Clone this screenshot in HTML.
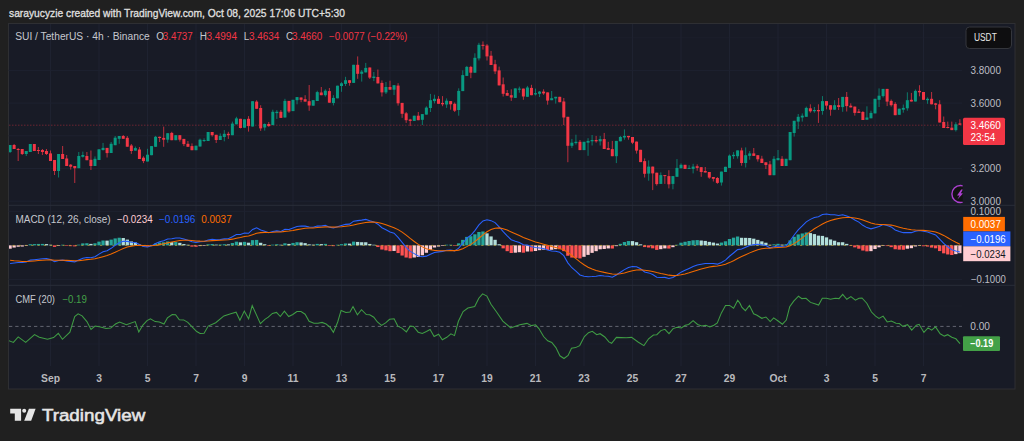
<!DOCTYPE html>
<html><head><meta charset="utf-8">
<style>
html,body{margin:0;padding:0;background:#202020;width:1024px;height:441px;overflow:hidden}
svg{display:block}
text{font-family:"Liberation Sans",sans-serif}
</style></head>
<body>
<svg width="1024" height="441" viewBox="0 0 1024 441">
<rect x="0" y="0" width="1024" height="441" fill="#202020"/>
<!-- header -->
<text x="9" y="17" font-size="11" fill="#dedede" stroke="#dedede" stroke-width="0.35" textLength="336" lengthAdjust="spacingAndGlyphs">sarayucyzie created with TradingView.com, Oct 08, 2025 17:06 UTC+5:30</text>
<!-- panel -->
<rect x="8.5" y="23.5" width="1006.5" height="365.5" fill="#181b26" stroke="#2e2f33" stroke-width="1"/>
<defs><clipPath id="ca"><rect x="9" y="24" width="953.7" height="342"/></clipPath></defs>
<g stroke="#1e2230" stroke-width="1"><line x1="50.50" y1="24" x2="50.50" y2="366" /><line x1="99.00" y1="24" x2="99.00" y2="366" /><line x1="147.50" y1="24" x2="147.50" y2="366" /><line x1="196.00" y1="24" x2="196.00" y2="366" /><line x1="244.50" y1="24" x2="244.50" y2="366" /><line x1="293.00" y1="24" x2="293.00" y2="366" /><line x1="341.50" y1="24" x2="341.50" y2="366" /><line x1="390.00" y1="24" x2="390.00" y2="366" /><line x1="438.50" y1="24" x2="438.50" y2="366" /><line x1="487.00" y1="24" x2="487.00" y2="366" /><line x1="535.50" y1="24" x2="535.50" y2="366" /><line x1="584.00" y1="24" x2="584.00" y2="366" /><line x1="632.50" y1="24" x2="632.50" y2="366" /><line x1="681.00" y1="24" x2="681.00" y2="366" /><line x1="729.50" y1="24" x2="729.50" y2="366" /><line x1="778.00" y1="24" x2="778.00" y2="366" /><line x1="826.50" y1="24" x2="826.50" y2="366" /><line x1="875.00" y1="24" x2="875.00" y2="366" /><line x1="923.50" y1="24" x2="923.50" y2="366" /><line x1="8.5" y1="70.4" x2="962" y2="70.4" /><line x1="8.5" y1="103.1" x2="962" y2="103.1" /><line x1="8.5" y1="135.8" x2="962" y2="135.8" /><line x1="8.5" y1="168.5" x2="962" y2="168.5" /><line x1="8.5" y1="201.2" x2="962" y2="201.2" /><line x1="8.5" y1="211.3" x2="962" y2="211.3" /><line x1="8.5" y1="279.4" x2="962" y2="279.4" /><line x1="9" y1="37.8" x2="962" y2="37.8" opacity="0.55"/><line x1="9" y1="306" x2="962" y2="306" opacity="0.35"/><line x1="9" y1="344" x2="962" y2="344" opacity="0.6"/></g>
<!-- pane separators -->
<line x1="9" y1="205.3" x2="1015" y2="205.3" stroke="#2a2e39" stroke-width="1"/>
<line x1="9" y1="285.3" x2="1015" y2="285.3" stroke="#2a2e39" stroke-width="1"/>
<g clip-path="url(#ca)">
<!-- price line -->
<line x1="9" y1="125.2" x2="962" y2="125.2" stroke="#f23645" stroke-width="1" stroke-dasharray="1.5 1.5" opacity="0.38"/>
<rect x="9.58" y="145.0" width="1" height="8.0" fill="#089981" opacity="0.75"/>
<rect x="8.58" y="145.0" width="3" height="7.0" fill="#089981"/>
<rect x="13.62" y="144.0" width="1" height="5.0" fill="#f23645" opacity="0.75"/>
<rect x="12.62" y="145.0" width="3" height="4.0" fill="#f23645"/>
<rect x="17.67" y="148.0" width="1" height="13.0" fill="#f23645" opacity="0.75"/>
<rect x="16.67" y="149.0" width="3" height="1.0" fill="#f23645"/>
<rect x="21.71" y="149.0" width="1" height="6.0" fill="#f23645" opacity="0.75"/>
<rect x="20.71" y="149.0" width="3" height="5.0" fill="#f23645"/>
<rect x="25.75" y="151.0" width="1" height="5.0" fill="#089981" opacity="0.75"/>
<rect x="24.75" y="151.0" width="3" height="3.0" fill="#089981"/>
<rect x="29.79" y="144.0" width="1" height="8.0" fill="#089981" opacity="0.75"/>
<rect x="28.79" y="144.0" width="3" height="8.0" fill="#089981"/>
<rect x="33.83" y="144.0" width="1" height="7.0" fill="#f23645" opacity="0.75"/>
<rect x="32.83" y="144.0" width="3" height="7.0" fill="#f23645"/>
<rect x="37.87" y="147.0" width="1" height="7.0" fill="#f23645" opacity="0.75"/>
<rect x="36.87" y="150.0" width="3" height="1.0" fill="#f23645"/>
<rect x="41.92" y="149.0" width="1" height="6.0" fill="#f23645" opacity="0.75"/>
<rect x="40.92" y="150.0" width="3" height="2.0" fill="#f23645"/>
<rect x="45.96" y="149.0" width="1" height="6.0" fill="#f23645" opacity="0.75"/>
<rect x="44.96" y="151.0" width="3" height="3.0" fill="#f23645"/>
<rect x="50.00" y="150.5" width="1" height="10.5" fill="#f23645" opacity="0.75"/>
<rect x="49.00" y="153.4" width="3" height="7.6" fill="#f23645"/>
<rect x="54.04" y="160.0" width="1" height="15.0" fill="#f23645" opacity="0.75"/>
<rect x="53.04" y="160.0" width="3" height="11.0" fill="#f23645"/>
<rect x="58.08" y="154.0" width="1" height="23.5" fill="#089981" opacity="0.75"/>
<rect x="57.08" y="154.0" width="3" height="17.0" fill="#089981"/>
<rect x="62.13" y="146.0" width="1" height="13.0" fill="#f23645" opacity="0.75"/>
<rect x="61.13" y="154.0" width="3" height="5.0" fill="#f23645"/>
<rect x="66.17" y="155.0" width="1" height="11.0" fill="#f23645" opacity="0.75"/>
<rect x="65.17" y="158.5" width="3" height="7.5" fill="#f23645"/>
<rect x="70.21" y="164.0" width="1" height="5.6" fill="#f23645" opacity="0.75"/>
<rect x="69.21" y="164.7" width="3" height="2.0" fill="#f23645"/>
<rect x="74.25" y="166.0" width="1" height="17.0" fill="#f23645" opacity="0.75"/>
<rect x="73.25" y="166.0" width="3" height="2.2" fill="#f23645"/>
<rect x="78.29" y="152.0" width="1" height="16.2" fill="#089981" opacity="0.75"/>
<rect x="77.29" y="156.0" width="3" height="12.2" fill="#089981"/>
<rect x="82.33" y="151.6" width="1" height="5.9" fill="#089981" opacity="0.75"/>
<rect x="81.33" y="155.0" width="3" height="1.8" fill="#089981"/>
<rect x="86.38" y="152.0" width="1" height="8.2" fill="#f23645" opacity="0.75"/>
<rect x="85.38" y="156.0" width="3" height="4.2" fill="#f23645"/>
<rect x="90.42" y="150.5" width="1" height="19.5" fill="#f23645" opacity="0.75"/>
<rect x="89.42" y="159.8" width="3" height="6.2" fill="#f23645"/>
<rect x="94.46" y="156.4" width="1" height="9.6" fill="#089981" opacity="0.75"/>
<rect x="93.46" y="158.8" width="3" height="7.2" fill="#089981"/>
<rect x="98.50" y="149.3" width="1" height="10.7" fill="#089981" opacity="0.75"/>
<rect x="97.50" y="149.3" width="3" height="10.7" fill="#089981"/>
<rect x="102.54" y="142.9" width="1" height="7.7" fill="#089981" opacity="0.75"/>
<rect x="101.54" y="147.9" width="3" height="2.1" fill="#089981"/>
<rect x="106.58" y="147.9" width="1" height="9.6" fill="#f23645" opacity="0.75"/>
<rect x="105.58" y="147.9" width="3" height="5.2" fill="#f23645"/>
<rect x="110.63" y="142.0" width="1" height="11.0" fill="#089981" opacity="0.75"/>
<rect x="109.63" y="143.8" width="3" height="9.2" fill="#089981"/>
<rect x="114.67" y="136.0" width="1" height="9.2" fill="#089981" opacity="0.75"/>
<rect x="113.67" y="137.7" width="3" height="7.5" fill="#089981"/>
<rect x="118.71" y="136.0" width="1" height="7.8" fill="#089981" opacity="0.75"/>
<rect x="117.71" y="136.0" width="3" height="2.8" fill="#089981"/>
<rect x="122.75" y="135.0" width="1" height="3.8" fill="#f23645" opacity="0.75"/>
<rect x="121.75" y="136.0" width="3" height="2.8" fill="#f23645"/>
<rect x="126.79" y="136.0" width="1" height="10.7" fill="#f23645" opacity="0.75"/>
<rect x="125.79" y="137.8" width="3" height="8.9" fill="#f23645"/>
<rect x="130.83" y="144.0" width="1" height="9.9" fill="#f23645" opacity="0.75"/>
<rect x="129.83" y="145.5" width="3" height="5.5" fill="#f23645"/>
<rect x="134.88" y="146.5" width="1" height="4.1" fill="#089981" opacity="0.75"/>
<rect x="133.88" y="148.1" width="3" height="2.5" fill="#089981"/>
<rect x="138.92" y="147.0" width="1" height="12.0" fill="#f23645" opacity="0.75"/>
<rect x="137.92" y="149.5" width="3" height="9.5" fill="#f23645"/>
<rect x="142.96" y="156.3" width="1" height="6.8" fill="#f23645" opacity="0.75"/>
<rect x="141.96" y="157.7" width="3" height="3.4" fill="#f23645"/>
<rect x="147.00" y="148.8" width="1" height="12.7" fill="#089981" opacity="0.75"/>
<rect x="146.00" y="154.7" width="3" height="6.8" fill="#089981"/>
<rect x="151.04" y="146.1" width="1" height="9.1" fill="#089981" opacity="0.75"/>
<rect x="150.04" y="146.1" width="3" height="9.1" fill="#089981"/>
<rect x="155.08" y="135.9" width="1" height="10.9" fill="#089981" opacity="0.75"/>
<rect x="154.08" y="136.8" width="3" height="10.0" fill="#089981"/>
<rect x="159.13" y="136.6" width="1" height="5.4" fill="#f23645" opacity="0.75"/>
<rect x="158.13" y="136.8" width="3" height="1.2" fill="#f23645"/>
<rect x="163.17" y="126.6" width="1" height="20.2" fill="#f23645" opacity="0.75"/>
<rect x="162.17" y="137.9" width="3" height="1.8" fill="#f23645"/>
<rect x="167.21" y="133.2" width="1" height="9.5" fill="#089981" opacity="0.75"/>
<rect x="166.21" y="133.2" width="3" height="6.5" fill="#089981"/>
<rect x="171.25" y="131.8" width="1" height="8.4" fill="#f23645" opacity="0.75"/>
<rect x="170.25" y="132.9" width="3" height="7.3" fill="#f23645"/>
<rect x="175.29" y="135.2" width="1" height="5.0" fill="#089981" opacity="0.75"/>
<rect x="174.29" y="135.2" width="3" height="5.0" fill="#089981"/>
<rect x="179.33" y="135.2" width="1" height="6.4" fill="#f23645" opacity="0.75"/>
<rect x="178.33" y="135.2" width="3" height="4.5" fill="#f23645"/>
<rect x="183.38" y="138.9" width="1" height="7.2" fill="#f23645" opacity="0.75"/>
<rect x="182.38" y="138.9" width="3" height="5.2" fill="#f23645"/>
<rect x="187.42" y="141.0" width="1" height="5.8" fill="#f23645" opacity="0.75"/>
<rect x="186.42" y="143.8" width="3" height="3.0" fill="#f23645"/>
<rect x="191.46" y="143.4" width="1" height="6.8" fill="#f23645" opacity="0.75"/>
<rect x="190.46" y="146.1" width="3" height="4.1" fill="#f23645"/>
<rect x="195.50" y="145.7" width="1" height="4.5" fill="#089981" opacity="0.75"/>
<rect x="194.50" y="145.7" width="3" height="4.5" fill="#089981"/>
<rect x="199.54" y="138.6" width="1" height="7.9" fill="#089981" opacity="0.75"/>
<rect x="198.54" y="139.7" width="3" height="6.8" fill="#089981"/>
<rect x="203.58" y="138.3" width="1" height="3.7" fill="#089981" opacity="0.75"/>
<rect x="202.58" y="140.0" width="3" height="1.0" fill="#089981"/>
<rect x="207.63" y="132.0" width="1" height="9.0" fill="#089981" opacity="0.75"/>
<rect x="206.63" y="132.0" width="3" height="9.0" fill="#089981"/>
<rect x="211.67" y="132.0" width="1" height="4.6" fill="#f23645" opacity="0.75"/>
<rect x="210.67" y="132.0" width="3" height="3.2" fill="#f23645"/>
<rect x="215.71" y="134.8" width="1" height="8.2" fill="#f23645" opacity="0.75"/>
<rect x="214.71" y="134.8" width="3" height="5.2" fill="#f23645"/>
<rect x="219.75" y="133.4" width="1" height="6.6" fill="#089981" opacity="0.75"/>
<rect x="218.75" y="135.9" width="3" height="4.1" fill="#089981"/>
<rect x="223.79" y="130.1" width="1" height="11.2" fill="#089981" opacity="0.75"/>
<rect x="222.79" y="133.8" width="3" height="3.2" fill="#089981"/>
<rect x="227.83" y="131.8" width="1" height="7.1" fill="#f23645" opacity="0.75"/>
<rect x="226.83" y="133.8" width="3" height="1.4" fill="#f23645"/>
<rect x="231.88" y="121.6" width="1" height="13.6" fill="#089981" opacity="0.75"/>
<rect x="230.88" y="123.6" width="3" height="11.6" fill="#089981"/>
<rect x="235.92" y="116.8" width="1" height="7.5" fill="#089981" opacity="0.75"/>
<rect x="234.92" y="118.4" width="3" height="5.9" fill="#089981"/>
<rect x="239.96" y="118.8" width="1" height="9.6" fill="#f23645" opacity="0.75"/>
<rect x="238.96" y="118.8" width="3" height="9.2" fill="#f23645"/>
<rect x="244.00" y="119.3" width="1" height="8.4" fill="#089981" opacity="0.75"/>
<rect x="243.00" y="119.3" width="3" height="8.4" fill="#089981"/>
<rect x="248.04" y="116.1" width="1" height="15.5" fill="#f23645" opacity="0.75"/>
<rect x="247.04" y="118.8" width="3" height="7.3" fill="#f23645"/>
<rect x="252.08" y="101.2" width="1" height="25.3" fill="#089981" opacity="0.75"/>
<rect x="251.08" y="101.2" width="3" height="25.3" fill="#089981"/>
<rect x="256.13" y="100.2" width="1" height="8.6" fill="#f23645" opacity="0.75"/>
<rect x="255.13" y="101.6" width="3" height="7.2" fill="#f23645"/>
<rect x="260.17" y="105.2" width="1" height="25.7" fill="#f23645" opacity="0.75"/>
<rect x="259.17" y="108.0" width="3" height="20.4" fill="#f23645"/>
<rect x="264.21" y="123.4" width="1" height="7.2" fill="#089981" opacity="0.75"/>
<rect x="263.21" y="124.0" width="3" height="3.5" fill="#089981"/>
<rect x="268.25" y="122.0" width="1" height="4.8" fill="#f23645" opacity="0.75"/>
<rect x="267.25" y="124.0" width="3" height="2.1" fill="#f23645"/>
<rect x="272.29" y="109.7" width="1" height="15.4" fill="#089981" opacity="0.75"/>
<rect x="271.29" y="111.8" width="3" height="13.3" fill="#089981"/>
<rect x="276.34" y="110.1" width="1" height="8.8" fill="#089981" opacity="0.75"/>
<rect x="275.34" y="111.8" width="3" height="1.3" fill="#089981"/>
<rect x="280.38" y="110.1" width="1" height="7.8" fill="#f23645" opacity="0.75"/>
<rect x="279.38" y="111.8" width="3" height="6.1" fill="#f23645"/>
<rect x="284.42" y="98.8" width="1" height="18.7" fill="#089981" opacity="0.75"/>
<rect x="283.42" y="100.9" width="3" height="16.6" fill="#089981"/>
<rect x="288.46" y="100.9" width="1" height="12.0" fill="#f23645" opacity="0.75"/>
<rect x="287.46" y="100.9" width="3" height="10.6" fill="#f23645"/>
<rect x="292.50" y="99.8" width="1" height="11.3" fill="#089981" opacity="0.75"/>
<rect x="291.50" y="99.8" width="3" height="11.3" fill="#089981"/>
<rect x="296.54" y="97.1" width="1" height="7.2" fill="#089981" opacity="0.75"/>
<rect x="295.54" y="97.1" width="3" height="3.1" fill="#089981"/>
<rect x="300.59" y="97.5" width="1" height="4.7" fill="#f23645" opacity="0.75"/>
<rect x="299.59" y="97.5" width="3" height="2.3" fill="#f23645"/>
<rect x="304.63" y="95.2" width="1" height="6.4" fill="#f23645" opacity="0.75"/>
<rect x="303.63" y="99.2" width="3" height="2.4" fill="#f23645"/>
<rect x="308.67" y="85.0" width="1" height="25.8" fill="#f23645" opacity="0.75"/>
<rect x="307.67" y="101.2" width="3" height="4.3" fill="#f23645"/>
<rect x="312.71" y="100.2" width="1" height="5.5" fill="#089981" opacity="0.75"/>
<rect x="311.71" y="100.2" width="3" height="5.5" fill="#089981"/>
<rect x="316.75" y="90.7" width="1" height="10.3" fill="#089981" opacity="0.75"/>
<rect x="315.75" y="92.1" width="3" height="8.9" fill="#089981"/>
<rect x="320.79" y="87.0" width="1" height="8.2" fill="#f23645" opacity="0.75"/>
<rect x="319.79" y="92.5" width="3" height="2.7" fill="#f23645"/>
<rect x="324.84" y="89.3" width="1" height="7.3" fill="#089981" opacity="0.75"/>
<rect x="323.84" y="90.7" width="3" height="4.5" fill="#089981"/>
<rect x="328.88" y="88.0" width="1" height="14.7" fill="#f23645" opacity="0.75"/>
<rect x="327.88" y="91.1" width="3" height="11.6" fill="#f23645"/>
<rect x="332.92" y="95.2" width="1" height="10.2" fill="#089981" opacity="0.75"/>
<rect x="331.92" y="97.9" width="3" height="5.1" fill="#089981"/>
<rect x="336.96" y="85.7" width="1" height="12.6" fill="#089981" opacity="0.75"/>
<rect x="335.96" y="85.7" width="3" height="12.6" fill="#089981"/>
<rect x="341.00" y="82.2" width="1" height="9.6" fill="#089981" opacity="0.75"/>
<rect x="340.00" y="83.3" width="3" height="2.7" fill="#089981"/>
<rect x="345.04" y="76.8" width="1" height="9.2" fill="#089981" opacity="0.75"/>
<rect x="344.04" y="80.2" width="3" height="3.7" fill="#089981"/>
<rect x="349.09" y="80.2" width="1" height="5.5" fill="#f23645" opacity="0.75"/>
<rect x="348.09" y="80.2" width="3" height="2.7" fill="#f23645"/>
<rect x="353.13" y="64.8" width="1" height="18.1" fill="#089981" opacity="0.75"/>
<rect x="352.13" y="64.8" width="3" height="18.1" fill="#089981"/>
<rect x="357.17" y="56.4" width="1" height="22.4" fill="#f23645" opacity="0.75"/>
<rect x="356.17" y="64.8" width="3" height="9.0" fill="#f23645"/>
<rect x="361.21" y="70.0" width="1" height="11.6" fill="#089981" opacity="0.75"/>
<rect x="360.21" y="71.6" width="3" height="2.2" fill="#089981"/>
<rect x="365.25" y="62.9" width="1" height="9.5" fill="#089981" opacity="0.75"/>
<rect x="364.25" y="67.9" width="3" height="4.5" fill="#089981"/>
<rect x="369.29" y="67.5" width="1" height="11.5" fill="#f23645" opacity="0.75"/>
<rect x="368.29" y="67.5" width="3" height="10.1" fill="#f23645"/>
<rect x="373.34" y="72.0" width="1" height="9.1" fill="#089981" opacity="0.75"/>
<rect x="372.34" y="76.6" width="3" height="1.4" fill="#089981"/>
<rect x="377.38" y="69.5" width="1" height="13.9" fill="#f23645" opacity="0.75"/>
<rect x="376.38" y="77.0" width="3" height="6.4" fill="#f23645"/>
<rect x="381.42" y="80.4" width="1" height="16.1" fill="#f23645" opacity="0.75"/>
<rect x="380.42" y="82.9" width="3" height="9.5" fill="#f23645"/>
<rect x="385.46" y="82.0" width="1" height="12.0" fill="#089981" opacity="0.75"/>
<rect x="384.46" y="87.0" width="3" height="5.4" fill="#089981"/>
<rect x="389.50" y="80.7" width="1" height="9.0" fill="#f23645" opacity="0.75"/>
<rect x="388.50" y="87.0" width="3" height="2.7" fill="#f23645"/>
<rect x="393.54" y="85.2" width="1" height="9.9" fill="#089981" opacity="0.75"/>
<rect x="392.54" y="85.2" width="3" height="4.5" fill="#089981"/>
<rect x="397.59" y="83.2" width="1" height="22.4" fill="#f23645" opacity="0.75"/>
<rect x="396.59" y="85.6" width="3" height="17.7" fill="#f23645"/>
<rect x="401.63" y="102.9" width="1" height="15.0" fill="#f23645" opacity="0.75"/>
<rect x="400.63" y="102.9" width="3" height="10.9" fill="#f23645"/>
<rect x="405.67" y="112.0" width="1" height="10.9" fill="#f23645" opacity="0.75"/>
<rect x="404.67" y="113.3" width="3" height="6.9" fill="#f23645"/>
<rect x="409.71" y="118.8" width="1" height="7.2" fill="#f23645" opacity="0.75"/>
<rect x="408.71" y="119.5" width="3" height="1.4" fill="#f23645"/>
<rect x="413.75" y="115.7" width="1" height="5.2" fill="#089981" opacity="0.75"/>
<rect x="412.75" y="115.7" width="3" height="5.2" fill="#089981"/>
<rect x="417.79" y="112.0" width="1" height="8.2" fill="#f23645" opacity="0.75"/>
<rect x="416.79" y="115.7" width="3" height="4.5" fill="#f23645"/>
<rect x="421.84" y="114.1" width="1" height="10.9" fill="#089981" opacity="0.75"/>
<rect x="420.84" y="114.1" width="3" height="5.7" fill="#089981"/>
<rect x="425.88" y="106.3" width="1" height="8.3" fill="#089981" opacity="0.75"/>
<rect x="424.88" y="107.6" width="3" height="7.0" fill="#089981"/>
<rect x="429.92" y="93.9" width="1" height="18.1" fill="#089981" opacity="0.75"/>
<rect x="428.92" y="100.2" width="3" height="7.8" fill="#089981"/>
<rect x="433.96" y="94.7" width="1" height="8.7" fill="#089981" opacity="0.75"/>
<rect x="432.96" y="98.8" width="3" height="2.3" fill="#089981"/>
<rect x="438.00" y="96.1" width="1" height="7.7" fill="#f23645" opacity="0.75"/>
<rect x="437.00" y="98.8" width="3" height="5.0" fill="#f23645"/>
<rect x="442.04" y="96.1" width="1" height="10.1" fill="#f23645" opacity="0.75"/>
<rect x="441.04" y="102.9" width="3" height="1.4" fill="#f23645"/>
<rect x="446.09" y="98.4" width="1" height="9.5" fill="#089981" opacity="0.75"/>
<rect x="445.09" y="100.7" width="3" height="3.8" fill="#089981"/>
<rect x="450.13" y="101.1" width="1" height="8.6" fill="#f23645" opacity="0.75"/>
<rect x="449.13" y="101.1" width="3" height="3.2" fill="#f23645"/>
<rect x="454.17" y="102.5" width="1" height="9.5" fill="#f23645" opacity="0.75"/>
<rect x="453.17" y="103.8" width="3" height="6.9" fill="#f23645"/>
<rect x="458.21" y="88.3" width="1" height="27.4" fill="#089981" opacity="0.75"/>
<rect x="457.21" y="90.9" width="3" height="19.1" fill="#089981"/>
<rect x="462.25" y="70.4" width="1" height="20.7" fill="#089981" opacity="0.75"/>
<rect x="461.25" y="75.1" width="3" height="16.0" fill="#089981"/>
<rect x="466.30" y="65.9" width="1" height="10.0" fill="#089981" opacity="0.75"/>
<rect x="465.30" y="66.9" width="3" height="9.0" fill="#089981"/>
<rect x="470.34" y="65.9" width="1" height="12.3" fill="#f23645" opacity="0.75"/>
<rect x="469.34" y="66.9" width="3" height="5.8" fill="#f23645"/>
<rect x="474.38" y="53.3" width="1" height="19.4" fill="#089981" opacity="0.75"/>
<rect x="473.38" y="57.8" width="3" height="14.9" fill="#089981"/>
<rect x="478.42" y="42.8" width="1" height="17.7" fill="#089981" opacity="0.75"/>
<rect x="477.42" y="44.8" width="3" height="13.6" fill="#089981"/>
<rect x="482.46" y="41.4" width="1" height="8.2" fill="#f23645" opacity="0.75"/>
<rect x="481.46" y="44.8" width="3" height="1.1" fill="#f23645"/>
<rect x="486.50" y="44.1" width="1" height="16.4" fill="#f23645" opacity="0.75"/>
<rect x="485.50" y="45.5" width="3" height="10.9" fill="#f23645"/>
<rect x="490.55" y="50.9" width="1" height="14.1" fill="#f23645" opacity="0.75"/>
<rect x="489.55" y="55.7" width="3" height="9.3" fill="#f23645"/>
<rect x="494.59" y="59.8" width="1" height="14.3" fill="#f23645" opacity="0.75"/>
<rect x="493.59" y="64.2" width="3" height="7.2" fill="#f23645"/>
<rect x="498.63" y="66.6" width="1" height="18.8" fill="#f23645" opacity="0.75"/>
<rect x="497.63" y="70.4" width="3" height="15.0" fill="#f23645"/>
<rect x="502.67" y="77.5" width="1" height="19.0" fill="#f23645" opacity="0.75"/>
<rect x="501.67" y="84.3" width="3" height="9.5" fill="#f23645"/>
<rect x="506.71" y="90.0" width="1" height="5.7" fill="#f23645" opacity="0.75"/>
<rect x="505.71" y="93.0" width="3" height="2.7" fill="#f23645"/>
<rect x="510.75" y="89.3" width="1" height="11.6" fill="#f23645" opacity="0.75"/>
<rect x="509.75" y="95.2" width="3" height="2.3" fill="#f23645"/>
<rect x="514.80" y="88.4" width="1" height="9.5" fill="#089981" opacity="0.75"/>
<rect x="513.80" y="88.4" width="3" height="9.5" fill="#089981"/>
<rect x="518.84" y="86.6" width="1" height="6.1" fill="#089981" opacity="0.75"/>
<rect x="517.84" y="88.6" width="3" height="1.1" fill="#089981"/>
<rect x="522.88" y="88.6" width="1" height="11.2" fill="#f23645" opacity="0.75"/>
<rect x="521.88" y="88.6" width="3" height="7.9" fill="#f23645"/>
<rect x="526.92" y="85.9" width="1" height="10.9" fill="#089981" opacity="0.75"/>
<rect x="525.92" y="87.5" width="3" height="9.3" fill="#089981"/>
<rect x="530.96" y="84.8" width="1" height="10.4" fill="#f23645" opacity="0.75"/>
<rect x="529.96" y="87.9" width="3" height="7.3" fill="#f23645"/>
<rect x="535.00" y="88.6" width="1" height="6.8" fill="#089981" opacity="0.75"/>
<rect x="534.00" y="93.2" width="3" height="1.2" fill="#089981"/>
<rect x="539.05" y="91.0" width="1" height="6.0" fill="#089981" opacity="0.75"/>
<rect x="538.05" y="91.6" width="3" height="2.2" fill="#089981"/>
<rect x="543.09" y="89.3" width="1" height="5.5" fill="#f23645" opacity="0.75"/>
<rect x="542.09" y="91.6" width="3" height="1.8" fill="#f23645"/>
<rect x="547.13" y="92.4" width="1" height="12.3" fill="#f23645" opacity="0.75"/>
<rect x="546.13" y="92.4" width="3" height="8.2" fill="#f23645"/>
<rect x="551.17" y="91.0" width="1" height="9.2" fill="#089981" opacity="0.75"/>
<rect x="550.17" y="98.2" width="3" height="2.0" fill="#089981"/>
<rect x="555.21" y="96.8" width="1" height="6.8" fill="#089981" opacity="0.75"/>
<rect x="554.21" y="96.8" width="3" height="1.6" fill="#089981"/>
<rect x="559.25" y="96.8" width="1" height="5.4" fill="#f23645" opacity="0.75"/>
<rect x="558.25" y="96.8" width="3" height="5.4" fill="#f23645"/>
<rect x="563.30" y="98.0" width="1" height="27.0" fill="#f23645" opacity="0.75"/>
<rect x="562.30" y="101.5" width="3" height="16.0" fill="#f23645"/>
<rect x="567.34" y="116.8" width="1" height="45.4" fill="#f23645" opacity="0.75"/>
<rect x="566.34" y="116.8" width="3" height="29.0" fill="#f23645"/>
<rect x="571.38" y="138.9" width="1" height="9.0" fill="#089981" opacity="0.75"/>
<rect x="570.38" y="142.7" width="3" height="3.1" fill="#089981"/>
<rect x="575.42" y="134.7" width="1" height="9.9" fill="#089981" opacity="0.75"/>
<rect x="574.42" y="141.8" width="3" height="1.3" fill="#089981"/>
<rect x="579.46" y="140.0" width="1" height="10.1" fill="#f23645" opacity="0.75"/>
<rect x="578.46" y="141.8" width="3" height="8.3" fill="#f23645"/>
<rect x="583.50" y="141.8" width="1" height="8.3" fill="#089981" opacity="0.75"/>
<rect x="582.50" y="141.8" width="3" height="8.3" fill="#089981"/>
<rect x="587.55" y="138.2" width="1" height="17.6" fill="#089981" opacity="0.75"/>
<rect x="586.55" y="140.9" width="3" height="1.8" fill="#089981"/>
<rect x="591.59" y="135.0" width="1" height="10.5" fill="#089981" opacity="0.75"/>
<rect x="590.59" y="140.0" width="3" height="1.3" fill="#089981"/>
<rect x="595.63" y="135.9" width="1" height="6.8" fill="#f23645" opacity="0.75"/>
<rect x="594.63" y="140.0" width="3" height="1.3" fill="#f23645"/>
<rect x="599.67" y="135.9" width="1" height="9.6" fill="#089981" opacity="0.75"/>
<rect x="598.67" y="139.1" width="3" height="2.2" fill="#089981"/>
<rect x="603.71" y="132.9" width="1" height="16.1" fill="#f23645" opacity="0.75"/>
<rect x="602.71" y="139.1" width="3" height="9.9" fill="#f23645"/>
<rect x="607.75" y="141.8" width="1" height="8.0" fill="#f23645" opacity="0.75"/>
<rect x="606.75" y="148.1" width="3" height="1.7" fill="#f23645"/>
<rect x="611.80" y="140.9" width="1" height="15.3" fill="#f23645" opacity="0.75"/>
<rect x="610.80" y="149.1" width="3" height="7.1" fill="#f23645"/>
<rect x="615.84" y="140.9" width="1" height="22.2" fill="#089981" opacity="0.75"/>
<rect x="614.84" y="140.9" width="3" height="15.3" fill="#089981"/>
<rect x="619.88" y="135.9" width="1" height="5.4" fill="#089981" opacity="0.75"/>
<rect x="618.88" y="137.0" width="3" height="4.3" fill="#089981"/>
<rect x="623.92" y="129.4" width="1" height="10.3" fill="#089981" opacity="0.75"/>
<rect x="622.92" y="135.9" width="3" height="1.6" fill="#089981"/>
<rect x="627.96" y="135.9" width="1" height="3.8" fill="#f23645" opacity="0.75"/>
<rect x="626.96" y="135.9" width="3" height="1.4" fill="#f23645"/>
<rect x="632.00" y="137.0" width="1" height="7.1" fill="#f23645" opacity="0.75"/>
<rect x="631.00" y="137.0" width="3" height="5.7" fill="#f23645"/>
<rect x="636.05" y="141.6" width="1" height="12.0" fill="#f23645" opacity="0.75"/>
<rect x="635.05" y="141.6" width="3" height="9.0" fill="#f23645"/>
<rect x="640.09" y="149.8" width="1" height="12.3" fill="#f23645" opacity="0.75"/>
<rect x="639.09" y="149.8" width="3" height="12.3" fill="#f23645"/>
<rect x="644.13" y="158.4" width="1" height="19.1" fill="#f23645" opacity="0.75"/>
<rect x="643.13" y="161.1" width="3" height="12.7" fill="#f23645"/>
<rect x="648.17" y="160.4" width="1" height="20.3" fill="#089981" opacity="0.75"/>
<rect x="647.17" y="166.6" width="3" height="7.0" fill="#089981"/>
<rect x="652.21" y="166.6" width="1" height="23.5" fill="#f23645" opacity="0.75"/>
<rect x="651.21" y="166.6" width="3" height="6.8" fill="#f23645"/>
<rect x="656.25" y="172.7" width="1" height="12.9" fill="#f23645" opacity="0.75"/>
<rect x="655.25" y="172.7" width="3" height="11.4" fill="#f23645"/>
<rect x="660.30" y="172.4" width="1" height="11.5" fill="#089981" opacity="0.75"/>
<rect x="659.30" y="175.1" width="3" height="8.8" fill="#089981"/>
<rect x="664.34" y="175.1" width="1" height="8.8" fill="#f23645" opacity="0.75"/>
<rect x="663.34" y="175.1" width="3" height="1.0" fill="#f23645"/>
<rect x="668.38" y="170.2" width="1" height="18.2" fill="#f23645" opacity="0.75"/>
<rect x="667.38" y="176.1" width="3" height="8.2" fill="#f23645"/>
<rect x="672.42" y="176.1" width="1" height="13.2" fill="#089981" opacity="0.75"/>
<rect x="671.42" y="176.1" width="3" height="7.8" fill="#089981"/>
<rect x="676.46" y="159.1" width="1" height="17.7" fill="#089981" opacity="0.75"/>
<rect x="675.46" y="167.9" width="3" height="8.9" fill="#089981"/>
<rect x="680.51" y="163.4" width="1" height="4.9" fill="#089981" opacity="0.75"/>
<rect x="679.51" y="164.8" width="3" height="3.5" fill="#089981"/>
<rect x="684.55" y="164.8" width="1" height="4.1" fill="#f23645" opacity="0.75"/>
<rect x="683.55" y="164.8" width="3" height="4.1" fill="#f23645"/>
<rect x="688.59" y="165.2" width="1" height="3.7" fill="#089981" opacity="0.75"/>
<rect x="687.59" y="167.9" width="3" height="1.0" fill="#089981"/>
<rect x="692.63" y="163.8" width="1" height="9.6" fill="#089981" opacity="0.75"/>
<rect x="691.63" y="166.6" width="3" height="2.3" fill="#089981"/>
<rect x="696.67" y="164.3" width="1" height="6.4" fill="#f23645" opacity="0.75"/>
<rect x="695.67" y="166.2" width="3" height="1.7" fill="#f23645"/>
<rect x="700.71" y="167.2" width="1" height="9.6" fill="#f23645" opacity="0.75"/>
<rect x="699.71" y="167.2" width="3" height="4.8" fill="#f23645"/>
<rect x="704.76" y="167.0" width="1" height="5.5" fill="#f23645" opacity="0.75"/>
<rect x="703.76" y="171.0" width="3" height="1.5" fill="#f23645"/>
<rect x="708.80" y="172.0" width="1" height="6.8" fill="#f23645" opacity="0.75"/>
<rect x="707.80" y="172.0" width="3" height="5.6" fill="#f23645"/>
<rect x="712.84" y="177.0" width="1" height="4.5" fill="#f23645" opacity="0.75"/>
<rect x="711.84" y="177.0" width="3" height="1.8" fill="#f23645"/>
<rect x="716.88" y="177.0" width="1" height="6.8" fill="#f23645" opacity="0.75"/>
<rect x="715.88" y="178.0" width="3" height="4.9" fill="#f23645"/>
<rect x="720.92" y="171.6" width="1" height="14.0" fill="#089981" opacity="0.75"/>
<rect x="719.92" y="171.6" width="3" height="10.9" fill="#089981"/>
<rect x="724.96" y="166.8" width="1" height="5.2" fill="#089981" opacity="0.75"/>
<rect x="723.96" y="166.8" width="3" height="5.2" fill="#089981"/>
<rect x="729.01" y="154.5" width="1" height="13.4" fill="#089981" opacity="0.75"/>
<rect x="728.01" y="155.6" width="3" height="12.3" fill="#089981"/>
<rect x="733.05" y="152.1" width="1" height="6.8" fill="#089981" opacity="0.75"/>
<rect x="732.05" y="154.8" width="3" height="1.4" fill="#089981"/>
<rect x="737.09" y="150.4" width="1" height="8.2" fill="#089981" opacity="0.75"/>
<rect x="736.09" y="150.4" width="3" height="5.8" fill="#089981"/>
<rect x="741.13" y="147.7" width="1" height="18.0" fill="#f23645" opacity="0.75"/>
<rect x="740.13" y="150.4" width="3" height="12.6" fill="#f23645"/>
<rect x="745.17" y="147.4" width="1" height="20.1" fill="#089981" opacity="0.75"/>
<rect x="744.17" y="155.2" width="3" height="7.8" fill="#089981"/>
<rect x="749.21" y="151.1" width="1" height="8.6" fill="#089981" opacity="0.75"/>
<rect x="748.21" y="153.4" width="3" height="2.5" fill="#089981"/>
<rect x="753.26" y="148.0" width="1" height="7.9" fill="#f23645" opacity="0.75"/>
<rect x="752.26" y="153.4" width="3" height="2.5" fill="#f23645"/>
<rect x="757.30" y="155.2" width="1" height="6.4" fill="#f23645" opacity="0.75"/>
<rect x="756.30" y="155.2" width="3" height="4.1" fill="#f23645"/>
<rect x="761.34" y="155.8" width="1" height="7.2" fill="#f23645" opacity="0.75"/>
<rect x="760.34" y="158.7" width="3" height="4.3" fill="#f23645"/>
<rect x="765.38" y="162.3" width="1" height="6.7" fill="#f23645" opacity="0.75"/>
<rect x="764.38" y="162.3" width="3" height="2.7" fill="#f23645"/>
<rect x="769.42" y="160.9" width="1" height="14.3" fill="#f23645" opacity="0.75"/>
<rect x="768.42" y="164.3" width="3" height="10.9" fill="#f23645"/>
<rect x="773.46" y="156.1" width="1" height="19.1" fill="#089981" opacity="0.75"/>
<rect x="772.46" y="158.8" width="3" height="16.4" fill="#089981"/>
<rect x="777.51" y="150.0" width="1" height="10.2" fill="#089981" opacity="0.75"/>
<rect x="776.51" y="158.1" width="3" height="2.1" fill="#089981"/>
<rect x="781.55" y="156.1" width="1" height="9.9" fill="#f23645" opacity="0.75"/>
<rect x="780.55" y="158.8" width="3" height="7.2" fill="#f23645"/>
<rect x="785.59" y="158.8" width="1" height="7.2" fill="#089981" opacity="0.75"/>
<rect x="784.59" y="158.8" width="3" height="7.2" fill="#089981"/>
<rect x="789.63" y="132.0" width="1" height="28.2" fill="#089981" opacity="0.75"/>
<rect x="788.63" y="132.0" width="3" height="28.2" fill="#089981"/>
<rect x="793.67" y="120.8" width="1" height="15.8" fill="#089981" opacity="0.75"/>
<rect x="792.67" y="120.8" width="3" height="12.2" fill="#089981"/>
<rect x="797.71" y="114.0" width="1" height="15.0" fill="#089981" opacity="0.75"/>
<rect x="796.71" y="116.8" width="3" height="4.8" fill="#089981"/>
<rect x="801.76" y="113.4" width="1" height="8.2" fill="#089981" opacity="0.75"/>
<rect x="800.76" y="115.7" width="3" height="1.8" fill="#089981"/>
<rect x="805.80" y="106.6" width="1" height="10.2" fill="#089981" opacity="0.75"/>
<rect x="804.80" y="107.9" width="3" height="8.9" fill="#089981"/>
<rect x="809.84" y="104.3" width="1" height="8.4" fill="#f23645" opacity="0.75"/>
<rect x="808.84" y="108.3" width="3" height="3.0" fill="#f23645"/>
<rect x="813.88" y="107.0" width="1" height="5.7" fill="#089981" opacity="0.75"/>
<rect x="812.88" y="110.0" width="3" height="1.2" fill="#089981"/>
<rect x="817.92" y="104.3" width="1" height="18.6" fill="#f23645" opacity="0.75"/>
<rect x="816.92" y="110.0" width="3" height="1.3" fill="#f23645"/>
<rect x="821.96" y="96.1" width="1" height="18.6" fill="#089981" opacity="0.75"/>
<rect x="820.96" y="101.1" width="3" height="9.9" fill="#089981"/>
<rect x="826.01" y="101.1" width="1" height="8.2" fill="#f23645" opacity="0.75"/>
<rect x="825.01" y="101.1" width="3" height="4.5" fill="#f23645"/>
<rect x="830.05" y="105.2" width="1" height="10.5" fill="#f23645" opacity="0.75"/>
<rect x="829.05" y="105.2" width="3" height="4.5" fill="#f23645"/>
<rect x="834.09" y="100.2" width="1" height="9.5" fill="#089981" opacity="0.75"/>
<rect x="833.09" y="105.2" width="3" height="4.5" fill="#089981"/>
<rect x="838.13" y="98.0" width="1" height="12.0" fill="#f23645" opacity="0.75"/>
<rect x="837.13" y="105.2" width="3" height="1.8" fill="#f23645"/>
<rect x="842.17" y="96.9" width="1" height="14.9" fill="#089981" opacity="0.75"/>
<rect x="841.17" y="96.9" width="3" height="10.2" fill="#089981"/>
<rect x="846.21" y="92.0" width="1" height="19.5" fill="#f23645" opacity="0.75"/>
<rect x="845.21" y="96.9" width="3" height="9.2" fill="#f23645"/>
<rect x="850.26" y="103.3" width="1" height="4.1" fill="#f23645" opacity="0.75"/>
<rect x="849.26" y="105.7" width="3" height="1.7" fill="#f23645"/>
<rect x="854.30" y="106.6" width="1" height="9.0" fill="#f23645" opacity="0.75"/>
<rect x="853.30" y="106.6" width="3" height="6.3" fill="#f23645"/>
<rect x="858.34" y="109.0" width="1" height="3.9" fill="#f23645" opacity="0.75"/>
<rect x="857.34" y="111.5" width="3" height="1.4" fill="#f23645"/>
<rect x="862.38" y="111.1" width="1" height="8.9" fill="#f23645" opacity="0.75"/>
<rect x="861.38" y="112.0" width="3" height="8.0" fill="#f23645"/>
<rect x="866.42" y="106.3" width="1" height="13.4" fill="#089981" opacity="0.75"/>
<rect x="865.42" y="117.5" width="3" height="2.2" fill="#089981"/>
<rect x="870.47" y="110.7" width="1" height="7.6" fill="#089981" opacity="0.75"/>
<rect x="869.47" y="112.9" width="3" height="5.4" fill="#089981"/>
<rect x="874.51" y="98.8" width="1" height="14.6" fill="#089981" opacity="0.75"/>
<rect x="873.51" y="98.8" width="3" height="14.6" fill="#089981"/>
<rect x="878.55" y="88.4" width="1" height="18.6" fill="#089981" opacity="0.75"/>
<rect x="877.55" y="95.7" width="3" height="4.1" fill="#089981"/>
<rect x="882.59" y="88.9" width="1" height="8.6" fill="#089981" opacity="0.75"/>
<rect x="881.59" y="88.9" width="3" height="7.2" fill="#089981"/>
<rect x="886.63" y="88.9" width="1" height="17.2" fill="#f23645" opacity="0.75"/>
<rect x="885.63" y="88.9" width="3" height="12.7" fill="#f23645"/>
<rect x="890.67" y="99.5" width="1" height="7.1" fill="#f23645" opacity="0.75"/>
<rect x="889.67" y="100.9" width="3" height="4.3" fill="#f23645"/>
<rect x="894.72" y="102.2" width="1" height="13.0" fill="#f23645" opacity="0.75"/>
<rect x="893.72" y="103.9" width="3" height="11.3" fill="#f23645"/>
<rect x="898.76" y="108.7" width="1" height="6.1" fill="#089981" opacity="0.75"/>
<rect x="897.76" y="108.7" width="3" height="6.1" fill="#089981"/>
<rect x="902.80" y="104.5" width="1" height="8.2" fill="#089981" opacity="0.75"/>
<rect x="901.80" y="107.9" width="3" height="1.8" fill="#089981"/>
<rect x="906.84" y="92.3" width="1" height="18.4" fill="#089981" opacity="0.75"/>
<rect x="905.84" y="100.2" width="3" height="8.1" fill="#089981"/>
<rect x="910.88" y="92.9" width="1" height="8.6" fill="#f23645" opacity="0.75"/>
<rect x="909.88" y="99.8" width="3" height="1.7" fill="#f23645"/>
<rect x="914.92" y="89.5" width="1" height="12.0" fill="#089981" opacity="0.75"/>
<rect x="913.92" y="90.9" width="3" height="10.6" fill="#089981"/>
<rect x="918.97" y="85.2" width="1" height="11.1" fill="#f23645" opacity="0.75"/>
<rect x="917.97" y="90.9" width="3" height="1.4" fill="#f23645"/>
<rect x="923.01" y="92.0" width="1" height="7.8" fill="#f23645" opacity="0.75"/>
<rect x="922.01" y="92.0" width="3" height="7.8" fill="#f23645"/>
<rect x="927.05" y="97.4" width="1" height="6.4" fill="#089981" opacity="0.75"/>
<rect x="926.05" y="98.8" width="3" height="1.4" fill="#089981"/>
<rect x="931.09" y="92.0" width="1" height="12.3" fill="#f23645" opacity="0.75"/>
<rect x="930.09" y="98.8" width="3" height="5.5" fill="#f23645"/>
<rect x="935.13" y="102.9" width="1" height="6.4" fill="#f23645" opacity="0.75"/>
<rect x="934.13" y="103.4" width="3" height="1.4" fill="#f23645"/>
<rect x="939.17" y="100.2" width="1" height="22.3" fill="#f23645" opacity="0.75"/>
<rect x="938.17" y="104.3" width="3" height="18.2" fill="#f23645"/>
<rect x="943.22" y="116.5" width="1" height="11.5" fill="#f23645" opacity="0.75"/>
<rect x="942.22" y="122.0" width="3" height="6.0" fill="#f23645"/>
<rect x="947.26" y="121.6" width="1" height="6.8" fill="#f23645" opacity="0.75"/>
<rect x="946.26" y="127.0" width="3" height="1.0" fill="#f23645"/>
<rect x="951.30" y="121.6" width="1" height="8.5" fill="#f23645" opacity="0.75"/>
<rect x="950.30" y="127.7" width="3" height="2.4" fill="#f23645"/>
<rect x="955.34" y="122.2" width="1" height="9.3" fill="#089981" opacity="0.75"/>
<rect x="954.34" y="124.3" width="3" height="5.8" fill="#089981"/>
<rect x="959.38" y="119.2" width="1" height="5.9" fill="#f23645" opacity="0.75"/>
<rect x="958.38" y="123.4" width="3" height="1.3" fill="#f23645"/>
<!-- macd -->
<rect x="8.43" y="245.35" width="3.3" height="3.34" fill="#ffcdd2"/>
<rect x="12.47" y="245.35" width="3.3" height="2.22" fill="#ffcdd2"/>
<rect x="16.52" y="245.35" width="3.3" height="1.39" fill="#ffcdd2"/>
<rect x="20.56" y="245.35" width="3.3" height="1.19" fill="#ffcdd2"/>
<rect x="24.60" y="245.35" width="3.3" height="0.60" fill="#ffcdd2"/>
<rect x="28.64" y="244.24" width="3.3" height="1.11" fill="#26a69a"/>
<rect x="32.68" y="244.10" width="3.3" height="1.25" fill="#26a69a"/>
<rect x="36.72" y="243.94" width="3.3" height="1.41" fill="#26a69a"/>
<rect x="40.77" y="243.91" width="3.3" height="1.44" fill="#26a69a"/>
<rect x="44.81" y="244.09" width="3.3" height="1.26" fill="#b2dfdb"/>
<rect x="48.85" y="244.75" width="3.3" height="0.60" fill="#b2dfdb"/>
<rect x="52.89" y="245.35" width="3.3" height="1.55" fill="#ff5252"/>
<rect x="56.93" y="245.35" width="3.3" height="0.60" fill="#ffcdd2"/>
<rect x="60.98" y="244.75" width="3.3" height="0.60" fill="#26a69a"/>
<rect x="65.02" y="245.35" width="3.3" height="0.60" fill="#ff5252"/>
<rect x="69.06" y="245.35" width="3.3" height="0.81" fill="#ff5252"/>
<rect x="73.10" y="245.35" width="3.3" height="1.02" fill="#ff5252"/>
<rect x="77.14" y="244.68" width="3.3" height="0.67" fill="#26a69a"/>
<rect x="81.18" y="243.39" width="3.3" height="1.96" fill="#26a69a"/>
<rect x="85.23" y="243.24" width="3.3" height="2.11" fill="#26a69a"/>
<rect x="89.27" y="243.89" width="3.3" height="1.46" fill="#b2dfdb"/>
<rect x="93.31" y="243.30" width="3.3" height="2.05" fill="#26a69a"/>
<rect x="97.35" y="241.65" width="3.3" height="3.70" fill="#26a69a"/>
<rect x="101.39" y="240.51" width="3.3" height="4.84" fill="#26a69a"/>
<rect x="105.43" y="240.63" width="3.3" height="4.72" fill="#b2dfdb"/>
<rect x="109.48" y="239.63" width="3.3" height="5.72" fill="#26a69a"/>
<rect x="113.52" y="238.42" width="3.3" height="6.93" fill="#26a69a"/>
<rect x="117.56" y="237.73" width="3.3" height="7.62" fill="#26a69a"/>
<rect x="121.60" y="238.02" width="3.3" height="7.33" fill="#b2dfdb"/>
<rect x="125.64" y="239.61" width="3.3" height="5.74" fill="#b2dfdb"/>
<rect x="129.68" y="241.46" width="3.3" height="3.89" fill="#b2dfdb"/>
<rect x="133.73" y="242.43" width="3.3" height="2.92" fill="#b2dfdb"/>
<rect x="137.77" y="244.65" width="3.3" height="0.70" fill="#b2dfdb"/>
<rect x="141.81" y="245.35" width="3.3" height="1.00" fill="#ff5252"/>
<rect x="145.85" y="245.35" width="3.3" height="1.16" fill="#ff5252"/>
<rect x="149.89" y="245.35" width="3.3" height="0.60" fill="#ffcdd2"/>
<rect x="153.93" y="243.47" width="3.3" height="1.88" fill="#26a69a"/>
<rect x="157.98" y="242.50" width="3.3" height="2.85" fill="#26a69a"/>
<rect x="162.02" y="242.29" width="3.3" height="3.06" fill="#26a69a"/>
<rect x="166.06" y="241.47" width="3.3" height="3.88" fill="#26a69a"/>
<rect x="170.10" y="242.11" width="3.3" height="3.24" fill="#b2dfdb"/>
<rect x="174.14" y="242.05" width="3.3" height="3.30" fill="#26a69a"/>
<rect x="178.18" y="242.82" width="3.3" height="2.53" fill="#b2dfdb"/>
<rect x="182.23" y="244.06" width="3.3" height="1.29" fill="#b2dfdb"/>
<rect x="186.27" y="244.75" width="3.3" height="0.60" fill="#b2dfdb"/>
<rect x="190.31" y="245.35" width="3.3" height="1.25" fill="#ff5252"/>
<rect x="194.35" y="245.35" width="3.3" height="1.43" fill="#ff5252"/>
<rect x="198.39" y="245.35" width="3.3" height="0.72" fill="#ffcdd2"/>
<rect x="202.43" y="245.35" width="3.3" height="0.60" fill="#ffcdd2"/>
<rect x="206.48" y="244.36" width="3.3" height="0.99" fill="#26a69a"/>
<rect x="210.52" y="244.06" width="3.3" height="1.29" fill="#26a69a"/>
<rect x="214.56" y="244.63" width="3.3" height="0.72" fill="#b2dfdb"/>
<rect x="218.60" y="244.52" width="3.3" height="0.83" fill="#26a69a"/>
<rect x="222.64" y="244.26" width="3.3" height="1.09" fill="#26a69a"/>
<rect x="226.68" y="244.39" width="3.3" height="0.96" fill="#b2dfdb"/>
<rect x="230.73" y="243.03" width="3.3" height="2.32" fill="#26a69a"/>
<rect x="234.77" y="241.67" width="3.3" height="3.68" fill="#26a69a"/>
<rect x="238.81" y="242.35" width="3.3" height="3.00" fill="#b2dfdb"/>
<rect x="242.85" y="241.85" width="3.3" height="3.50" fill="#26a69a"/>
<rect x="246.89" y="242.70" width="3.3" height="2.65" fill="#b2dfdb"/>
<rect x="250.93" y="240.15" width="3.3" height="5.20" fill="#26a69a"/>
<rect x="254.98" y="239.93" width="3.3" height="5.42" fill="#26a69a"/>
<rect x="259.02" y="242.79" width="3.3" height="2.56" fill="#b2dfdb"/>
<rect x="263.06" y="244.25" width="3.3" height="1.10" fill="#b2dfdb"/>
<rect x="267.10" y="245.35" width="3.3" height="0.60" fill="#ff5252"/>
<rect x="271.14" y="244.68" width="3.3" height="0.67" fill="#26a69a"/>
<rect x="275.19" y="244.25" width="3.3" height="1.10" fill="#26a69a"/>
<rect x="279.23" y="244.75" width="3.3" height="0.60" fill="#b2dfdb"/>
<rect x="283.27" y="243.30" width="3.3" height="2.05" fill="#26a69a"/>
<rect x="287.31" y="243.90" width="3.3" height="1.45" fill="#b2dfdb"/>
<rect x="291.35" y="242.93" width="3.3" height="2.42" fill="#26a69a"/>
<rect x="295.39" y="242.22" width="3.3" height="3.13" fill="#26a69a"/>
<rect x="299.44" y="242.45" width="3.3" height="2.90" fill="#b2dfdb"/>
<rect x="303.48" y="243.13" width="3.3" height="2.22" fill="#b2dfdb"/>
<rect x="307.52" y="244.34" width="3.3" height="1.01" fill="#b2dfdb"/>
<rect x="311.56" y="244.61" width="3.3" height="0.74" fill="#b2dfdb"/>
<rect x="315.60" y="243.90" width="3.3" height="1.45" fill="#26a69a"/>
<rect x="319.64" y="244.11" width="3.3" height="1.24" fill="#b2dfdb"/>
<rect x="323.69" y="243.87" width="3.3" height="1.48" fill="#26a69a"/>
<rect x="327.73" y="245.35" width="3.3" height="0.60" fill="#ff5252"/>
<rect x="331.77" y="245.35" width="3.3" height="0.79" fill="#ff5252"/>
<rect x="335.81" y="244.75" width="3.3" height="0.60" fill="#26a69a"/>
<rect x="339.85" y="244.16" width="3.3" height="1.19" fill="#26a69a"/>
<rect x="343.89" y="243.45" width="3.3" height="1.90" fill="#26a69a"/>
<rect x="347.94" y="243.64" width="3.3" height="1.71" fill="#b2dfdb"/>
<rect x="351.98" y="241.62" width="3.3" height="3.73" fill="#26a69a"/>
<rect x="356.02" y="241.93" width="3.3" height="3.42" fill="#b2dfdb"/>
<rect x="360.06" y="242.21" width="3.3" height="3.14" fill="#b2dfdb"/>
<rect x="364.10" y="242.25" width="3.3" height="3.10" fill="#b2dfdb"/>
<rect x="368.14" y="243.94" width="3.3" height="1.41" fill="#b2dfdb"/>
<rect x="372.19" y="244.75" width="3.3" height="0.60" fill="#b2dfdb"/>
<rect x="376.23" y="245.35" width="3.3" height="1.69" fill="#ff5252"/>
<rect x="380.27" y="245.35" width="3.3" height="4.19" fill="#ff5252"/>
<rect x="384.31" y="245.35" width="3.3" height="5.02" fill="#ff5252"/>
<rect x="388.35" y="245.35" width="3.3" height="5.82" fill="#ff5252"/>
<rect x="392.39" y="245.35" width="3.3" height="5.59" fill="#ffcdd2"/>
<rect x="396.44" y="245.35" width="3.3" height="7.72" fill="#ff5252"/>
<rect x="400.48" y="245.35" width="3.3" height="10.19" fill="#ff5252"/>
<rect x="404.52" y="245.35" width="3.3" height="12.18" fill="#ff5252"/>
<rect x="408.56" y="245.35" width="3.3" height="12.97" fill="#ff5252"/>
<rect x="412.60" y="245.35" width="3.3" height="12.16" fill="#ffcdd2"/>
<rect x="416.64" y="245.35" width="3.3" height="11.64" fill="#ffcdd2"/>
<rect x="420.69" y="245.35" width="3.3" height="9.91" fill="#ffcdd2"/>
<rect x="424.73" y="245.35" width="3.3" height="7.43" fill="#ffcdd2"/>
<rect x="428.77" y="245.35" width="3.3" height="4.47" fill="#ffcdd2"/>
<rect x="432.81" y="245.35" width="3.3" height="2.15" fill="#ffcdd2"/>
<rect x="436.85" y="245.35" width="3.3" height="1.20" fill="#ffcdd2"/>
<rect x="440.89" y="245.35" width="3.3" height="0.60" fill="#ffcdd2"/>
<rect x="444.94" y="244.75" width="3.3" height="0.60" fill="#26a69a"/>
<rect x="448.98" y="244.75" width="3.3" height="0.60" fill="#26a69a"/>
<rect x="453.02" y="245.35" width="3.3" height="0.60" fill="#ff5252"/>
<rect x="457.06" y="243.32" width="3.3" height="2.03" fill="#26a69a"/>
<rect x="461.10" y="239.88" width="3.3" height="5.47" fill="#26a69a"/>
<rect x="465.15" y="236.90" width="3.3" height="8.45" fill="#26a69a"/>
<rect x="469.19" y="236.23" width="3.3" height="9.12" fill="#26a69a"/>
<rect x="473.23" y="234.32" width="3.3" height="11.03" fill="#26a69a"/>
<rect x="477.27" y="232.00" width="3.3" height="13.35" fill="#26a69a"/>
<rect x="481.31" y="231.46" width="3.3" height="13.89" fill="#26a69a"/>
<rect x="485.35" y="233.34" width="3.3" height="12.01" fill="#b2dfdb"/>
<rect x="489.40" y="236.42" width="3.3" height="8.93" fill="#b2dfdb"/>
<rect x="493.44" y="239.81" width="3.3" height="5.54" fill="#b2dfdb"/>
<rect x="497.48" y="244.24" width="3.3" height="1.11" fill="#b2dfdb"/>
<rect x="501.52" y="245.35" width="3.3" height="3.00" fill="#ff5252"/>
<rect x="505.56" y="245.35" width="3.3" height="5.83" fill="#ff5252"/>
<rect x="509.60" y="245.35" width="3.3" height="7.67" fill="#ff5252"/>
<rect x="513.65" y="245.35" width="3.3" height="7.34" fill="#ffcdd2"/>
<rect x="517.69" y="245.35" width="3.3" height="6.87" fill="#ffcdd2"/>
<rect x="521.73" y="245.35" width="3.3" height="7.36" fill="#ff5252"/>
<rect x="525.77" y="245.35" width="3.3" height="6.16" fill="#ffcdd2"/>
<rect x="529.81" y="245.35" width="3.3" height="6.16" fill="#ff5252"/>
<rect x="533.85" y="245.35" width="3.3" height="5.65" fill="#ffcdd2"/>
<rect x="537.90" y="245.35" width="3.3" height="4.82" fill="#ffcdd2"/>
<rect x="541.94" y="245.35" width="3.3" height="4.31" fill="#ffcdd2"/>
<rect x="545.98" y="245.35" width="3.3" height="4.73" fill="#ff5252"/>
<rect x="550.02" y="245.35" width="3.3" height="4.43" fill="#ffcdd2"/>
<rect x="554.06" y="245.35" width="3.3" height="3.81" fill="#ffcdd2"/>
<rect x="558.10" y="245.35" width="3.3" height="3.92" fill="#ff5252"/>
<rect x="562.15" y="245.35" width="3.3" height="5.79" fill="#ff5252"/>
<rect x="566.19" y="245.35" width="3.3" height="10.38" fill="#ff5252"/>
<rect x="570.23" y="245.35" width="3.3" height="12.23" fill="#ff5252"/>
<rect x="574.27" y="245.35" width="3.3" height="12.54" fill="#ff5252"/>
<rect x="578.31" y="245.35" width="3.3" height="13.06" fill="#ff5252"/>
<rect x="582.35" y="245.35" width="3.3" height="11.45" fill="#ffcdd2"/>
<rect x="586.40" y="245.35" width="3.3" height="9.54" fill="#ffcdd2"/>
<rect x="590.44" y="245.35" width="3.3" height="7.52" fill="#ffcdd2"/>
<rect x="594.48" y="245.35" width="3.3" height="5.82" fill="#ffcdd2"/>
<rect x="598.52" y="245.35" width="3.3" height="3.93" fill="#ffcdd2"/>
<rect x="602.56" y="245.35" width="3.3" height="3.62" fill="#ffcdd2"/>
<rect x="606.60" y="245.35" width="3.3" height="3.09" fill="#ffcdd2"/>
<rect x="610.65" y="245.35" width="3.3" height="3.19" fill="#ff5252"/>
<rect x="614.69" y="245.35" width="3.3" height="0.80" fill="#ffcdd2"/>
<rect x="618.73" y="243.82" width="3.3" height="1.53" fill="#26a69a"/>
<rect x="622.77" y="242.04" width="3.3" height="3.31" fill="#26a69a"/>
<rect x="626.81" y="241.03" width="3.3" height="4.32" fill="#26a69a"/>
<rect x="630.85" y="241.10" width="3.3" height="4.25" fill="#b2dfdb"/>
<rect x="634.90" y="242.19" width="3.3" height="3.16" fill="#b2dfdb"/>
<rect x="638.94" y="244.34" width="3.3" height="1.01" fill="#b2dfdb"/>
<rect x="642.98" y="245.35" width="3.3" height="1.72" fill="#ff5252"/>
<rect x="647.02" y="245.35" width="3.3" height="2.16" fill="#ff5252"/>
<rect x="651.06" y="245.35" width="3.3" height="2.99" fill="#ff5252"/>
<rect x="655.11" y="245.35" width="3.3" height="4.54" fill="#ff5252"/>
<rect x="659.15" y="245.35" width="3.3" height="3.83" fill="#ffcdd2"/>
<rect x="663.19" y="245.35" width="3.3" height="3.06" fill="#ffcdd2"/>
<rect x="667.23" y="245.35" width="3.3" height="3.24" fill="#ff5252"/>
<rect x="671.27" y="245.35" width="3.3" height="1.82" fill="#ffcdd2"/>
<rect x="675.31" y="244.75" width="3.3" height="0.60" fill="#26a69a"/>
<rect x="679.36" y="242.69" width="3.3" height="2.66" fill="#26a69a"/>
<rect x="683.40" y="241.77" width="3.3" height="3.58" fill="#26a69a"/>
<rect x="687.44" y="240.99" width="3.3" height="4.36" fill="#26a69a"/>
<rect x="691.48" y="240.30" width="3.3" height="5.05" fill="#26a69a"/>
<rect x="695.52" y="240.07" width="3.3" height="5.28" fill="#26a69a"/>
<rect x="699.56" y="240.52" width="3.3" height="4.83" fill="#b2dfdb"/>
<rect x="703.61" y="240.91" width="3.3" height="4.44" fill="#b2dfdb"/>
<rect x="707.65" y="241.86" width="3.3" height="3.49" fill="#b2dfdb"/>
<rect x="711.69" y="242.59" width="3.3" height="2.76" fill="#b2dfdb"/>
<rect x="715.73" y="243.55" width="3.3" height="1.80" fill="#b2dfdb"/>
<rect x="719.77" y="242.56" width="3.3" height="2.79" fill="#26a69a"/>
<rect x="723.81" y="241.27" width="3.3" height="4.08" fill="#26a69a"/>
<rect x="727.86" y="239.01" width="3.3" height="6.34" fill="#26a69a"/>
<rect x="731.90" y="237.66" width="3.3" height="7.69" fill="#26a69a"/>
<rect x="735.94" y="236.50" width="3.3" height="8.85" fill="#26a69a"/>
<rect x="739.98" y="237.78" width="3.3" height="7.57" fill="#b2dfdb"/>
<rect x="744.02" y="237.85" width="3.3" height="7.50" fill="#b2dfdb"/>
<rect x="748.06" y="237.96" width="3.3" height="7.39" fill="#b2dfdb"/>
<rect x="752.11" y="238.68" width="3.3" height="6.67" fill="#b2dfdb"/>
<rect x="756.15" y="239.88" width="3.3" height="5.47" fill="#b2dfdb"/>
<rect x="760.19" y="241.37" width="3.3" height="3.98" fill="#b2dfdb"/>
<rect x="764.23" y="242.74" width="3.3" height="2.61" fill="#b2dfdb"/>
<rect x="768.27" y="244.75" width="3.3" height="0.60" fill="#b2dfdb"/>
<rect x="772.31" y="244.34" width="3.3" height="1.01" fill="#26a69a"/>
<rect x="776.36" y="243.82" width="3.3" height="1.53" fill="#26a69a"/>
<rect x="780.40" y="244.61" width="3.3" height="0.74" fill="#b2dfdb"/>
<rect x="784.44" y="244.16" width="3.3" height="1.19" fill="#26a69a"/>
<rect x="788.48" y="240.37" width="3.3" height="4.98" fill="#26a69a"/>
<rect x="792.52" y="236.76" width="3.3" height="8.59" fill="#26a69a"/>
<rect x="796.56" y="234.43" width="3.3" height="10.92" fill="#26a69a"/>
<rect x="800.61" y="233.44" width="3.3" height="11.91" fill="#26a69a"/>
<rect x="804.65" y="232.48" width="3.3" height="12.87" fill="#26a69a"/>
<rect x="808.69" y="233.10" width="3.3" height="12.25" fill="#b2dfdb"/>
<rect x="812.73" y="234.10" width="3.3" height="11.25" fill="#b2dfdb"/>
<rect x="816.77" y="235.62" width="3.3" height="9.73" fill="#b2dfdb"/>
<rect x="820.81" y="235.90" width="3.3" height="9.45" fill="#b2dfdb"/>
<rect x="824.86" y="237.37" width="3.3" height="7.98" fill="#b2dfdb"/>
<rect x="828.90" y="239.46" width="3.3" height="5.89" fill="#b2dfdb"/>
<rect x="832.94" y="240.71" width="3.3" height="4.64" fill="#b2dfdb"/>
<rect x="836.98" y="242.21" width="3.3" height="3.14" fill="#b2dfdb"/>
<rect x="841.02" y="242.22" width="3.3" height="3.13" fill="#b2dfdb"/>
<rect x="845.06" y="243.86" width="3.3" height="1.49" fill="#b2dfdb"/>
<rect x="849.11" y="245.35" width="3.3" height="0.60" fill="#ff5252"/>
<rect x="853.15" y="245.35" width="3.3" height="1.99" fill="#ff5252"/>
<rect x="857.19" y="245.35" width="3.3" height="3.36" fill="#ff5252"/>
<rect x="861.23" y="245.35" width="3.3" height="5.22" fill="#ff5252"/>
<rect x="865.27" y="245.35" width="3.3" height="6.01" fill="#ff5252"/>
<rect x="869.32" y="245.35" width="3.3" height="5.80" fill="#ffcdd2"/>
<rect x="873.36" y="245.35" width="3.3" height="3.69" fill="#ffcdd2"/>
<rect x="877.40" y="245.35" width="3.3" height="1.96" fill="#ffcdd2"/>
<rect x="881.44" y="245.35" width="3.3" height="0.60" fill="#ffcdd2"/>
<rect x="885.48" y="245.35" width="3.3" height="0.74" fill="#ff5252"/>
<rect x="889.52" y="245.35" width="3.3" height="1.80" fill="#ff5252"/>
<rect x="893.57" y="245.35" width="3.3" height="3.88" fill="#ff5252"/>
<rect x="897.61" y="245.35" width="3.3" height="4.29" fill="#ff5252"/>
<rect x="901.65" y="245.35" width="3.3" height="4.39" fill="#ff5252"/>
<rect x="905.69" y="245.35" width="3.3" height="3.35" fill="#ffcdd2"/>
<rect x="909.73" y="245.35" width="3.3" height="2.84" fill="#ffcdd2"/>
<rect x="913.77" y="245.35" width="3.3" height="1.11" fill="#ffcdd2"/>
<rect x="917.82" y="245.35" width="3.3" height="0.60" fill="#ffcdd2"/>
<rect x="921.86" y="245.35" width="3.3" height="0.90" fill="#ff5252"/>
<rect x="925.90" y="245.35" width="3.3" height="1.23" fill="#ff5252"/>
<rect x="929.94" y="245.35" width="3.3" height="2.25" fill="#ff5252"/>
<rect x="933.98" y="245.35" width="3.3" height="2.96" fill="#ff5252"/>
<rect x="938.02" y="245.35" width="3.3" height="5.72" fill="#ff5252"/>
<rect x="942.07" y="245.35" width="3.3" height="7.99" fill="#ff5252"/>
<rect x="946.11" y="245.35" width="3.3" height="9.09" fill="#ff5252"/>
<rect x="950.15" y="245.35" width="3.3" height="9.65" fill="#ff5252"/>
<rect x="954.19" y="245.35" width="3.3" height="8.77" fill="#ffcdd2"/>
<rect x="958.23" y="245.35" width="3.3" height="7.84" fill="#ffcdd2"/>
<line x1="0" y1="245.4" x2="962" y2="245.4" stroke="#c8b43c" stroke-width="0.9" stroke-dasharray="2.2 4.05" opacity="0.75"/>
<polyline points="10.08,263.54 14.12,262.97 18.17,262.49 22.21,262.58 26.25,261.96 30.29,260.12 34.33,259.68 38.37,259.16 42.42,258.77 46.46,258.64 50.50,259.55 54.54,261.76 58.58,260.49 62.63,260.14 66.67,260.87 70.71,261.38 74.75,261.84 78.79,259.99 82.83,258.21 86.88,257.53 90.92,257.82 94.96,256.71 99.00,254.14 103.04,251.78 107.08,250.73 111.13,248.30 115.17,245.35 119.21,242.76 123.25,241.22 127.29,241.37 131.33,242.25 135.38,242.50 139.42,244.53 143.46,246.48 147.50,246.94 151.54,245.84 155.58,243.44 159.63,241.76 163.67,240.78 167.71,238.99 171.75,238.82 175.79,237.93 179.83,238.07 183.88,238.99 187.92,240.23 191.96,241.82 196.00,242.37 200.04,241.83 204.08,241.50 208.13,239.95 212.17,239.34 216.21,239.72 220.25,239.40 224.29,238.87 228.33,238.77 232.38,236.83 236.42,234.54 240.46,234.47 244.50,233.09 248.54,233.28 252.58,229.43 256.63,227.86 260.67,230.08 264.71,231.27 268.75,232.71 272.79,231.60 276.84,230.89 280.88,231.52 284.92,229.34 288.96,229.57 293.00,227.99 297.04,226.51 301.09,226.00 305.13,226.13 309.17,227.10 313.21,227.18 317.25,226.11 321.29,226.00 325.34,225.39 329.38,227.13 333.42,227.91 337.46,226.69 341.50,225.55 345.54,224.36 349.59,224.12 353.63,221.17 357.67,220.63 361.71,220.12 365.75,219.39 369.79,220.73 373.84,221.89 377.88,224.20 381.92,227.75 385.96,229.83 390.00,232.08 394.04,233.25 398.09,237.32 402.13,242.33 406.17,247.36 410.21,251.40 414.25,253.62 418.29,256.02 422.34,256.77 426.38,256.14 430.42,254.30 434.46,252.52 438.50,251.87 442.54,251.38 446.59,250.32 450.63,250.04 454.67,250.82 458.71,248.09 462.75,243.29 466.80,238.19 470.84,235.24 474.88,230.57 478.92,224.91 482.96,220.90 487.00,219.78 491.05,220.63 495.09,222.63 499.13,226.79 503.17,231.65 507.21,235.93 511.25,239.69 515.30,241.19 519.34,242.45 523.38,244.78 527.42,245.11 531.46,246.66 535.50,247.55 539.55,247.93 543.59,248.50 547.63,250.10 551.67,250.91 555.71,251.24 559.75,252.33 563.80,255.65 567.84,262.83 571.88,267.75 575.92,271.19 579.96,274.97 584.00,276.22 588.05,276.70 592.09,276.56 596.13,276.32 600.17,275.41 604.21,276.00 608.25,276.24 612.30,277.15 616.34,274.95 620.38,272.25 624.42,269.64 628.46,267.55 632.50,266.55 636.55,266.85 640.59,268.74 644.63,271.91 648.67,272.88 652.71,274.47 656.75,277.15 660.80,277.40 664.84,277.39 668.88,278.39 672.92,277.43 676.96,274.94 681.01,272.15 685.05,270.33 689.09,268.46 693.13,266.51 697.17,264.96 701.21,264.21 705.26,263.48 709.30,263.55 713.34,263.60 717.38,264.11 721.42,262.42 725.46,260.11 729.51,256.26 733.55,253.00 737.59,249.62 741.63,249.01 745.67,247.20 749.71,245.47 753.76,244.52 757.80,244.35 761.84,244.84 765.88,245.57 769.92,247.83 773.96,246.85 778.01,245.94 782.05,246.54 786.09,245.80 790.13,240.76 794.17,235.01 798.21,229.95 802.26,225.98 806.30,221.80 810.34,219.35 814.38,217.55 818.42,216.64 822.46,214.56 826.51,214.03 830.55,214.65 834.59,214.73 838.63,215.45 842.67,214.68 846.71,215.95 850.76,217.49 854.80,219.94 858.84,222.14 862.88,225.31 866.92,227.61 870.97,228.84 875.01,227.66 879.05,226.42 883.09,224.53 887.13,225.40 891.17,226.91 895.22,229.96 899.26,231.45 903.30,232.64 907.34,232.43 911.38,232.64 915.42,231.18 919.47,230.44 923.51,231.27 927.55,231.91 931.59,233.49 935.63,234.94 939.67,239.13 943.72,243.40 947.76,246.77 951.80,249.74 955.84,251.06 959.88,252.09" fill="none" stroke="#2962ff" stroke-width="1.05"/>
<polyline points="10.08,260.20 14.12,260.76 18.17,261.10 22.21,261.40 26.25,261.51 30.29,261.23 34.33,260.92 38.37,260.57 42.42,260.21 46.46,259.90 50.50,259.83 54.54,260.21 58.58,260.27 62.63,260.24 66.67,260.37 70.71,260.57 74.75,260.83 78.79,260.66 82.83,260.17 86.88,259.64 90.92,259.28 94.96,258.76 99.00,257.84 103.04,256.63 107.08,255.45 111.13,254.02 115.17,252.29 119.21,250.38 123.25,248.55 127.29,247.11 131.33,246.14 135.38,245.41 139.42,245.24 143.46,245.48 147.50,245.77 151.54,245.79 155.58,245.32 159.63,244.61 163.67,243.84 167.71,242.87 171.75,242.06 175.79,241.23 179.83,240.60 183.88,240.28 187.92,240.27 191.96,240.58 196.00,240.94 200.04,241.12 204.08,241.19 208.13,240.94 212.17,240.62 216.21,240.44 220.25,240.23 224.29,239.96 228.33,239.72 232.38,239.14 236.42,238.22 240.46,237.47 244.50,236.60 248.54,235.94 252.58,234.63 256.63,233.28 260.67,232.64 264.71,232.37 268.75,232.43 272.79,232.27 276.84,231.99 280.88,231.90 284.92,231.39 288.96,231.02 293.00,230.42 297.04,229.64 301.09,228.91 305.13,228.35 309.17,228.10 313.21,227.92 317.25,227.56 321.29,227.24 325.34,226.87 329.38,226.93 333.42,227.12 337.46,227.04 341.50,226.74 345.54,226.26 349.59,225.84 353.63,224.90 357.67,224.05 361.71,223.26 365.75,222.49 369.79,222.14 373.84,222.09 377.88,222.51 381.92,223.56 385.96,224.81 390.00,226.27 394.04,227.66 398.09,229.59 402.13,232.14 406.17,235.19 410.21,238.43 414.25,241.47 418.29,244.38 422.34,246.86 426.38,248.71 430.42,249.83 434.46,250.37 438.50,250.67 442.54,250.81 446.59,250.71 450.63,250.58 454.67,250.63 458.71,250.12 462.75,248.75 466.80,246.64 470.84,244.36 474.88,241.60 478.92,238.26 482.96,234.79 487.00,231.79 491.05,229.56 495.09,228.17 499.13,227.89 503.17,228.65 507.21,230.10 511.25,232.02 515.30,233.85 519.34,235.57 523.38,237.41 527.42,238.95 531.46,240.49 535.50,241.91 539.55,243.11 543.59,244.19 547.63,245.37 551.67,246.48 555.71,247.43 559.75,248.41 563.80,249.86 567.84,252.45 571.88,255.51 575.92,258.65 579.96,261.91 584.00,264.77 588.05,267.16 592.09,269.04 596.13,270.50 600.17,271.48 604.21,272.38 608.25,273.16 612.30,273.95 616.34,274.15 620.38,273.77 624.42,272.94 628.46,271.86 632.50,270.80 636.55,270.01 640.59,269.76 644.63,270.19 648.67,270.73 652.71,271.48 656.75,272.61 660.80,273.57 664.84,274.33 668.88,275.14 672.92,275.60 676.96,275.47 681.01,274.80 685.05,273.91 689.09,272.82 693.13,271.56 697.17,270.24 701.21,269.03 705.26,267.92 709.30,267.05 713.34,266.36 717.38,265.91 721.42,265.21 725.46,264.19 729.51,262.61 733.55,260.68 737.59,258.47 741.63,256.58 745.67,254.70 749.71,252.86 753.76,251.19 757.80,249.82 761.84,248.83 765.88,248.17 769.92,248.11 773.96,247.85 778.01,247.47 782.05,247.29 786.09,246.99 790.13,245.74 794.17,243.60 798.21,240.87 802.26,237.89 806.30,234.67 810.34,231.61 814.38,228.80 818.42,226.37 822.46,224.00 826.51,222.01 830.55,220.54 834.59,219.38 838.63,218.59 842.67,217.81 846.71,217.44 850.76,217.45 854.80,217.95 858.84,218.78 862.88,220.09 866.92,221.59 870.97,223.04 875.01,223.97 879.05,224.46 883.09,224.47 887.13,224.66 891.17,225.11 895.22,226.08 899.26,227.15 903.30,228.25 907.34,229.09 911.38,229.80 915.42,230.07 919.47,230.15 923.51,230.37 927.55,230.68 931.59,231.24 935.63,231.98 939.67,233.41 943.72,235.41 947.76,237.68 951.80,240.09 955.84,242.29 959.88,244.25" fill="none" stroke="#f26a00" stroke-width="1.05"/>
<!-- cmf -->
<line x1="9" y1="326.4" x2="962" y2="326.4" stroke="#9598a1" stroke-width="1" stroke-dasharray="3.3 2.95" opacity="0.6"/>
<polyline points="8.0,340.3 13.4,342.4 18.2,336.9 25.7,342.4 34.5,334.6 39.3,337.3 47.5,339.3 53.6,337.6 58.3,333.3 62.4,339.3 69.9,332.2 74.7,316.5 78.1,313.8 82.1,315.9 86.9,321.6 91.0,329.5 95.1,326.1 100.5,327.0 106.0,328.4 110.7,328.1 115.5,324.0 119.6,322.0 126.4,324.7 135.2,321.6 138.8,331.9 142.9,325.1 147.0,320.6 150.4,318.8 155.2,321.6 159.3,322.0 164.0,324.0 167.4,317.9 172.2,314.5 175.6,314.8 179.3,319.7 183.7,319.9 187.8,322.4 192.6,327.4 196.7,331.5 200.1,333.5 204.1,333.3 208.2,326.1 215.7,322.7 223.9,315.9 230.7,313.8 236.1,312.2 239.9,320.2 244.3,311.1 248.6,318.8 252.2,305.6 260.4,323.7 264.9,319.3 268.3,317.2 272.4,313.4 276.5,312.4 280.3,316.5 284.4,311.1 288.7,316.5 292.8,314.5 296.9,311.5 301.0,311.5 305.1,314.2 309.1,321.3 313.9,323.3 318.0,323.3 322.1,322.4 326.1,324.0 330.2,327.4 333.4,332.4 337.7,322.0 341.1,310.4 345.9,312.4 350.0,312.0 353.0,306.6 357.4,314.8 361.5,309.7 366.3,314.5 369.7,314.8 373.8,317.2 377.4,322.0 381.5,325.4 385.6,322.9 389.6,319.3 394.1,318.8 397.8,326.1 401.9,328.1 406.4,331.9 410.1,326.1 413.5,326.5 418.2,332.2 422.3,333.5 426.4,331.5 430.1,329.5 434.1,336.5 438.6,334.2 442.3,339.7 446.8,337.3 450.9,333.8 454.5,335.6 458.4,321.3 463.1,311.5 467.9,308.0 474.7,306.6 478.8,298.2 482.6,293.8 486.9,296.1 491.0,304.3 496.4,311.8 502.8,321.1 510.7,327.9 519.8,324.8 527.0,323.4 531.4,325.6 535.5,324.8 538.9,328.6 543.6,336.5 547.7,340.8 551.8,342.4 555.9,347.6 559.9,355.8 564.0,358.5 568.1,355.5 571.5,348.3 575.6,347.6 579.7,345.6 584.4,336.5 588.5,332.7 592.3,331.3 596.7,334.7 600.1,333.7 604.8,337.0 608.9,341.9 611.6,343.3 616.4,337.4 626.2,337.8 631.6,337.4 638.4,342.2 643.9,345.6 648.6,338.8 653.4,335.1 656.8,334.7 660.9,330.6 664.9,329.3 669.0,333.7 673.1,328.6 677.2,327.2 681.3,327.9 685.3,325.2 688.7,324.5 693.1,320.7 697.6,324.5 701.7,325.9 705.8,325.2 709.8,326.9 713.9,325.2 717.3,322.9 721.4,312.9 725.5,305.4 729.6,305.4 733.6,308.2 737.7,300.3 740.0,303.4 742.0,307.4 745.4,310.6 749.5,305.4 753.6,313.8 757.0,315.2 761.8,318.3 765.9,317.0 770.2,321.5 773.7,317.9 778.1,321.0 782.4,324.2 786.3,320.1 789.7,306.8 793.7,301.1 798.5,296.2 801.9,298.6 806.0,298.3 810.5,302.4 814.8,303.8 818.6,305.1 822.3,298.3 826.4,298.3 830.5,299.3 835.2,298.3 839.0,298.6 842.7,294.3 846.8,299.3 850.9,296.6 855.4,300.2 859.0,298.3 862.0,298.0 866.8,303.2 871.5,312.0 875.6,316.1 879.0,318.4 883.1,316.1 887.2,321.9 891.3,321.1 896.0,323.3 899.4,323.6 902.8,326.3 907.6,324.7 911.7,330.1 916.4,325.2 919.1,324.3 923.9,332.4 928.0,327.9 931.7,330.1 935.5,326.9 940.2,333.8 944.3,336.1 947.7,334.7 951.8,337.2 955.9,338.8 960.0,343.7" fill="none" stroke="#3f9c44" stroke-width="1.05"/>
<!-- icon -->
<circle cx="960.4" cy="194" r="8.5" fill="#121212" stroke="#ab40d0" stroke-width="1.4"/>
<path d="M961.2,189.6 L963,189.6 L960.8,193.3 L963.2,193.3 L957.4,199.6 L959.6,195.5 L957,195.5 Z" fill="#ab40d0"/>
</g>
<!-- legend -->
<g font-size="10">
<text x="15.2" y="39.9" fill="#c6c8ce" textLength="134.5" lengthAdjust="spacingAndGlyphs">SUI / TetherUS · 4h · Binance</text>
<text x="156.2" y="39.9" fill="#c6c8ce">O</text>
<text x="162.8" y="39.9" fill="#f23645" textLength="29.9" lengthAdjust="spacingAndGlyphs">3.4737</text>
<text x="199.8" y="39.9" fill="#c6c8ce">H</text>
<text x="206.4" y="39.9" fill="#f23645" textLength="30.6" lengthAdjust="spacingAndGlyphs">3.4994</text>
<text x="243.7" y="39.9" fill="#c6c8ce">L</text>
<text x="249" y="39.9" fill="#f23645" textLength="30.2" lengthAdjust="spacingAndGlyphs">3.4634</text>
<text x="285.9" y="39.9" fill="#c6c8ce">C</text>
<text x="292" y="39.9" fill="#f23645" textLength="30.25" lengthAdjust="spacingAndGlyphs">3.4660</text>
<text x="329" y="39.9" fill="#f23645" textLength="78.25" lengthAdjust="spacingAndGlyphs">−0.0077 (−0.22%)</text>
<text x="15.5" y="223.3" fill="#c6c8ce" textLength="95.1" lengthAdjust="spacingAndGlyphs">MACD (12, 26, close)</text>
<text x="116.9" y="223.3" fill="#ffcdd2" textLength="35.8" lengthAdjust="spacingAndGlyphs">−0.0234</text>
<text x="159" y="223.3" fill="#2962ff" textLength="36.4" lengthAdjust="spacingAndGlyphs">−0.0196</text>
<text x="201.2" y="223.3" fill="#ff6d00" textLength="30.5" lengthAdjust="spacingAndGlyphs">0.0037</text>
<text x="15.5" y="302.5" fill="#c6c8ce" textLength="39.5" lengthAdjust="spacingAndGlyphs">CMF (20)</text>
<text x="62.4" y="302.5" fill="#43a047" textLength="24.5" lengthAdjust="spacingAndGlyphs">−0.19</text>
</g>
<!-- USDT -->
<rect x="966" y="27" width="45.5" height="21.5" rx="3.5" fill="#0e0e10" stroke="#34363c" stroke-width="1"/>
<text x="973.9" y="41" font-size="10" fill="#e8e8e8" textLength="22.9" lengthAdjust="spacingAndGlyphs">USDT</text>
<!-- price axis -->
<g font-size="10" fill="#bdbec4">
<text x="970.6" y="74.2" textLength="30.3" lengthAdjust="spacingAndGlyphs">3.8000</text>
<text x="970.6" y="106.6" textLength="30.3" lengthAdjust="spacingAndGlyphs">3.6000</text>
<text x="970.6" y="172" textLength="30.3" lengthAdjust="spacingAndGlyphs">3.2000</text>
<text x="970.6" y="204.5" textLength="30.3" lengthAdjust="spacingAndGlyphs">3.0000</text>
<text x="970.6" y="214.8" textLength="30.3" lengthAdjust="spacingAndGlyphs">0.1000</text>
<text x="971" y="282.6" textLength="34.8" lengthAdjust="spacingAndGlyphs">−0.1000</text>
<text x="970.3" y="329.8" textLength="19.7" lengthAdjust="spacingAndGlyphs">0.00</text>
</g>
<rect x="963" y="117.7" width="42" height="27.2" rx="1.5" fill="#f23645"/>
<g font-size="10" fill="#ffffff">
<text x="970.4" y="129" textLength="30.4" lengthAdjust="spacingAndGlyphs">3.4660</text>
<text x="970.4" y="140.8" textLength="24.9" lengthAdjust="spacingAndGlyphs">23:54</text>
</g>
<rect x="963.2" y="216.9" width="41.7" height="14.5" fill="#ff6d00"/>
<rect x="963.2" y="231.4" width="47.2" height="14.9" fill="#2962ff"/>
<rect x="963.2" y="246.3" width="47.2" height="14.9" fill="#ffcdd2"/>
<rect x="963" y="336.2" width="37" height="14.8" rx="1" fill="#43a047"/>
<g font-size="10">
<text x="970.6" y="227.8" fill="#ffffff" textLength="30.3" lengthAdjust="spacingAndGlyphs">0.0037</text>
<text x="970.6" y="242.6" fill="#ffffff" textLength="35" lengthAdjust="spacingAndGlyphs">−0.0196</text>
<text x="970.6" y="257.5" fill="#131722" textLength="35" lengthAdjust="spacingAndGlyphs">−0.0234</text>
<text x="970.2" y="347.3" fill="#ffffff" font-weight="bold" textLength="23" lengthAdjust="spacingAndGlyphs">−0.19</text>
</g>
<!-- time axis -->
<g font-size="10.3" font-weight="bold" fill="#b9b9bd" text-anchor="middle">
<text x="50.5" y="382">Sep</text>
<text x="99" y="382">3</text>
<text x="147.5" y="382">5</text>
<text x="196" y="382">7</text>
<text x="244.5" y="382">9</text>
<text x="293" y="382">11</text>
<text x="341.5" y="382">13</text>
<text x="390" y="382">15</text>
<text x="438.5" y="382">17</text>
<text x="487" y="382">19</text>
<text x="535.5" y="382">21</text>
<text x="584" y="382">23</text>
<text x="632.5" y="382">25</text>
<text x="681" y="382">27</text>
<text x="729.5" y="382">29</text>
<text x="778" y="382">Oct</text>
<text x="826.5" y="382">3</text>
<text x="875" y="382">5</text>
<text x="923.5" y="382">7</text>
</g>
<!-- logo -->
<g fill="#e6e6e6">
<path d="M10.2,408.8 H21.1 V420.8 H14.8 V413.4 H10.2 Z"/>
<circle cx="24.2" cy="410.7" r="2"/>
<path d="M28.9,408.8 H35.6 L31.2,420.8 H24.2 Z"/>
<text x="41.9" y="420.8" font-size="17.2" stroke="#e6e6e6" stroke-width="0.55" textLength="103.4" lengthAdjust="spacingAndGlyphs">TradingView</text>
</g>
</svg>
</body></html>
